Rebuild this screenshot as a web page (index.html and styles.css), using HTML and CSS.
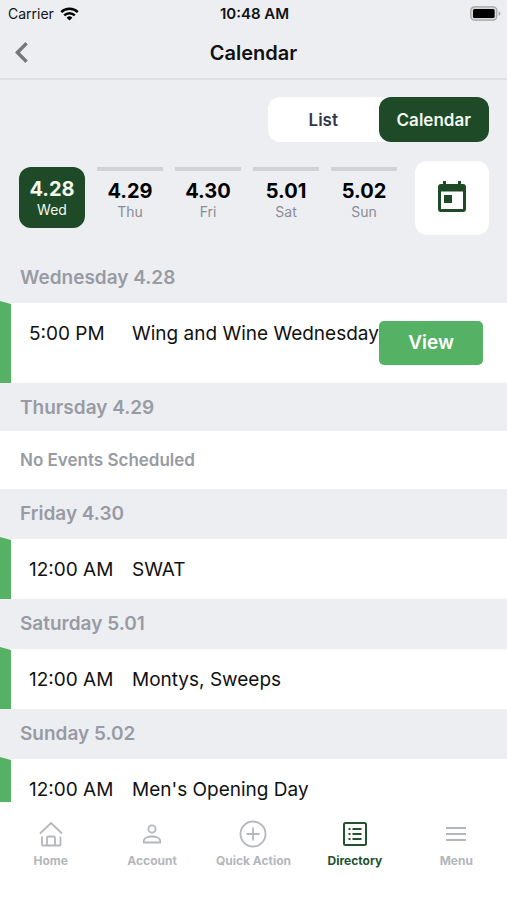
FILE: index.html
```html
<!DOCTYPE html>
<html lang="en">
<head>
<meta charset="utf-8">
<meta name="viewport" content="width=device-width, initial-scale=1">
<title>Calendar</title>
<link rel="stylesheet" href="styles.css">
</head>
<body>
<div class="app">
  <div class="status">
    <div class="carrier"><span>Carrier</span>
      <svg width="19" height="14" viewBox="0 0 19 14" fill="none" stroke="#000" stroke-width="2.4"><path d="M1.2 5.2a11.8 11.8 0 0 1 16.6 0"/><path d="M4.2 8.4a7.5 7.5 0 0 1 10.6 0"/><path d="M9.5 13.6 6.6 10.7a4.1 4.1 0 0 1 5.8 0z" fill="#000" stroke="none"/></svg>
    </div>
    <span class="time">10:48 AM</span>
    <svg class="battery" width="31" height="15" viewBox="0 0 31 15"><rect x=".8" y=".8" width="26" height="13.4" rx="3.6" fill="#d8d8da" stroke="#a4a4a6" stroke-width="1.2"/><rect x="3" y="3" width="21.6" height="9" rx="1.5" fill="#000"/><path d="M28.600 5.200c2.400.8 2.400 3.800 0 4.600z" fill="#a4a4a6"/></svg>
  </div>
  <header class="nav">
    <button class="back" type="button" aria-label="Back"><svg width="13" height="21" viewBox="0 0 13 21" fill="none" stroke="#77777a" stroke-width="3.4"><path d="M11.6 1.3 2.4 10.5l9.2 9.2"/></svg></button>
    <h1>Calendar</h1>
  </header>
  <main>
    <div class="controls">
      <div class="toggle"><button type="button">List</button><button type="button" class="on">Calendar</button></div>
      <div class="strip">
        <button type="button" class="day selected"><b>4.28</b><span>Wed</span></button>
        <button type="button" class="day"><b>4.29</b><span>Thu</span></button>
        <button type="button" class="day"><b>4.30</b><span>Fri</span></button>
        <button type="button" class="day"><b>5.01</b><span>Sat</span></button>
        <button type="button" class="day"><b>5.02</b><span>Sun</span></button>
        <button type="button" class="pick" aria-label="Pick a date"><svg width="28" height="31" viewBox="0 0 28 31"><path fill="#1e4a28" fill-rule="evenodd" d="M5 0h3v3h12V0h3v3h2a3 3 0 0 1 3 3v22a3 3 0 0 1-3 3H3a3 3 0 0 1-3-3V6a3 3 0 0 1 3-3h2zM3 10.500v17.500h22V10.500zM6 14h8v8H6z"/></svg></button>
      </div>
    </div>
    <h2 class="first">Wednesday 4.28</h2>
    <div class="event tall"><time>5:00 PM</time><span class="name">Wing and Wine Wednesday</span><button type="button" class="view">View</button></div>
    <h2 class="compact">Thursday 4.29</h2>
    <p class="empty">No Events Scheduled</p>
    <h2>Friday 4.30</h2>
    <div class="event"><time>12:00 AM</time><span class="name">SWAT</span></div>
    <h2>Saturday 5.01</h2>
    <div class="event"><time>12:00 AM</time><span class="name">Montys, Sweeps</span></div>
    <h2>Sunday 5.02</h2>
    <div class="event"><time>12:00 AM</time><span class="name">Men's Opening Day</span></div>
  </main>
  <nav class="tabs">
    <a href="#home"><svg width="28" height="28" viewBox="0 0 28 28"><path d="M3 13.500 14 3l11 10.500M5 16.500V24.500q0 1 1 1h16.500q1 0 1-1v-8M10 25.500v-7.500q0-1.500 1.500-1.500h5q1.500 0 1.500 1.500v7.500"/></svg><span>Home</span></a>
    <a href="#account"><svg width="28" height="28" viewBox="0 0 28 28"><circle cx="14" cy="9" r="3.600"/><path d="M5.800 22.500v-1.700c0-2.800 4-4.300 8.200-4.300s8.200 1.500 8.200 4.300v1.700z"/></svg><span>Account</span></a>
    <a href="#quick"><svg width="28" height="28" viewBox="0 0 28 28"><circle cx="14" cy="14" r="12.500"/><path d="M14 7.500v13M7.500 14h13"/></svg><span>Quick Action</span></a>
    <a href="#directory" class="active"><svg width="28" height="28" viewBox="0 0 28 28"><rect x="3" y="3" width="22" height="22" rx="1.500"/><path d="M7.500 9h2M7.500 14h2M7.500 19h2M11.500 9h9M11.500 14h9M11.500 19h9"/></svg><span>Directory</span></a>
    <a href="#menu"><svg width="28" height="28" viewBox="0 0 28 28"><path d="M4 8h20M4 14h20M4 20h20"/></svg><span>Menu</span></a>
  </nav>
</div>
</body>
</html>
```
FILE: styles.css
```css
* { box-sizing: border-box; }
body, h1, h2, p { margin: 0; }
body { background: #fff; color: #111; font-family: Inter, "Liberation Sans", sans-serif; }
button { border: 0; padding: 0; background: none; color: inherit; font: inherit; }
svg { display: block; }

.app { display: flex; flex-direction: column; height: 100vh; overflow: hidden; }

.status {
  display: grid;
  grid-template-columns: 1fr auto 1fr;
  align-items: center;
  height: 27px;
  padding: 0 6px 0 8px;
  background: #edeef2;
  font-size: 14px;
  flex: none;
}
.carrier { display: flex; align-items: center; gap: 6px; }
.time { font-size: 15px; font-weight: 600; }
.battery { justify-self: end; }

.nav {
  display: grid;
  grid-template-columns: 40px 1fr 40px;
  align-items: center;
  height: 53px;
  padding: 0 15px;
  background: #edeef2;
  border-bottom: 2px solid #dfe0e3;
  flex: none;
}
h1 { font-size: 20px; font-weight: 600; line-height: 24px; text-align: center; }

main { flex: 1; min-height: 0; overflow: hidden; background: #edeef2; }
.controls { padding: 17px 18px 0 19px; }
.toggle {
  display: grid;
  grid-template-columns: 1fr 1fr;
  width: 221px;
  height: 45px;
  margin-left: auto;
  border-radius: 12px;
  background: #fff;
  color: #34364a;
  font-size: 17px;
  font-weight: 600;
}
.toggle .on { border-radius: 12px; background: #1e4a28; color: #f2f8ee; }

.strip { display: flex; align-items: flex-start; gap: 12px; margin-top: 19px; }
.day {
  display: flex;
  flex: 1;
  flex-direction: column;
  align-items: center;
  height: 61px;
  margin-top: 6px;
  padding-top: 8px;
  border-top: 4px solid #d2d3d7;
  color: #000;
}
.day b { font-size: 20px; line-height: 24px; font-weight: 700; }
.day span { font-size: 14px; line-height: 18px; color: #8b8c93; }
.day.selected { padding-top: 10px; border-top: 0; border-radius: 12px; background: #1e4a28; color: #f2f8ee; }
.day.selected span { color: #f2f8ee; }
.pick {
  display: grid;
  place-items: center;
  width: 74px;
  height: 74px;
  margin-left: 6px;
  padding-bottom: 4px;
  border-radius: 12px;
  background: #fff;
}

h2 {
  padding: 13px 20px;
  color: #989ba3;
  font-size: 19px;
  font-weight: 600;
  line-height: 24px;
}
.first { padding-top: 31px; }
.compact { padding-bottom: 11px; }
.event {
  position: relative;
  display: flex;
  align-items: flex-start;
  min-height: 60px;
  padding: 18px 24px 18px 29px;
  background: #fff;
  font-size: 19px;
  line-height: 22px;
}
.event::before {
  content: "";
  position: absolute;
  left: 0;
  top: -2px;
  bottom: 0;
  width: 11px;
  background: #55b163;
  clip-path: polygon(0 0, 100% 3px, 100% 100%, 0 100%);
}
.event time { width: 103px; flex: none; padding-top: 2px; }
.name { flex: 1; padding-top: 2px; white-space: nowrap; }
.view {
  width: 104px;
  height: 44px;
  flex: none;
  border-radius: 5px;
  background: #55b163;
  color: #fff;
  font-weight: 600;
}
.empty {
  padding: 17px 20px;
  background: #fff;
  color: #989ba3;
  font-size: 17px;
  font-weight: 600;
  line-height: 24px;
}

.tabs {
  display: grid;
  grid-template-columns: repeat(5, 1fr);
  flex: none;
  height: 98px;
  padding-top: 18px;
  background: #fff;
}
.tabs a {
  display: flex;
  flex-direction: column;
  align-items: center;
  gap: 5px;
  color: #b4b7bc;
  font-size: 12px;
  font-weight: 700;
  line-height: 16px;
  text-decoration: none;
}
.tabs svg { fill: none; stroke: currentColor; stroke-width: 1.8; }
.tabs .active { color: #23522f; }
.tabs .active svg { stroke-width: 2; }
```
